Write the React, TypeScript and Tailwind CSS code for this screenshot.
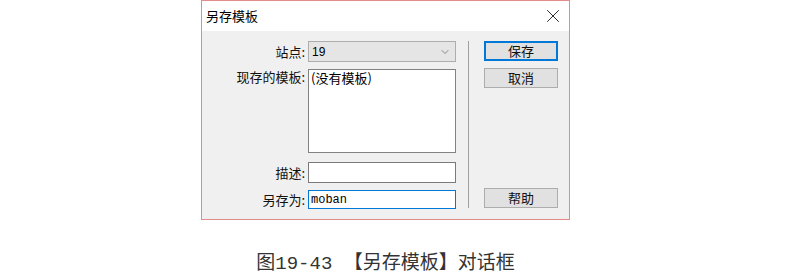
import { ChevronDown, X } from "lucide-react";

const ui = { fontFamily: '"Noto Sans CJK SC", "Noto Sans", sans-serif' };

function Btn({ label, focus }: { label: string; focus?: boolean }) {
  return (
    <div
      className={
        "flex h-[20px] w-[74px] items-center justify-center text-[13px] text-[#111] bg-[#e1e1e1] " +
        (focus ? "border-2 border-[#0078d7]" : "border border-[#adadad]")
      }
    >
      {label}
    </div>
  );
}

export default function App() {
  return (
    <div className="h-[279px] w-[812px] bg-white overflow-hidden" style={ui}>
      <div className="ml-[201px] flex h-[220px] w-[369px] flex-col border border-[#e38b8b] bg-[#f0f0f0]">
        {/* title bar */}
        <div className="flex h-[30px] items-center justify-between bg-white pl-[4px] pr-[5px]">
          <span className="text-[13px] text-black">另存模板</span>
          <X size={22} strokeWidth={0.9} className="text-black" />
        </div>

        <div className="flex flex-1 pt-[10px]">
          {/* fields */}
          <div className="flex w-[256px] flex-col">
            <div className="flex h-[21px] items-center">
              <span className="w-[106px] pr-[3px] text-right text-[13px] text-[#111]">站点:</span>
              <div className="flex h-[21px] w-[148px] items-center justify-between border border-[#adadad] bg-[#e5e5e5] pl-[3px] pr-[4px]">
                <span className="text-[12px] text-black" style={{ fontFamily: '"Liberation Sans", sans-serif' }}>19</span>
                <ChevronDown size={12} strokeWidth={1.3} className="text-[#555]" />
              </div>
            </div>
            <div className="mt-[7px] flex">
              <span className="w-[106px] pr-[3px] text-right text-[13px] leading-[16px] text-[#111]">现存的模板:</span>
              <div className="h-[84px] w-[148px] border border-[#828282] bg-white pl-[2px] text-[13px] leading-[16px] text-black">
                (没有模板)
              </div>
            </div>
            <div className="mt-[9px] flex h-[21px] items-center">
              <span className="w-[106px] pr-[3px] text-right text-[13px] text-[#111]">描述:</span>
              <div className="h-[21px] w-[148px] border border-[#7a7a7a] bg-white" />
            </div>
            <div className="mt-[7px] flex h-[19px] items-center">
              <span className="w-[106px] pr-[3px] text-right text-[13px] text-[#111]">另存为:</span>
              <div
                className="flex h-[19px] w-[148px] items-center border border-[#0078d7] bg-white pl-[2px] text-[12px] text-black"
                style={{ fontFamily: '"Liberation Mono", monospace' }}
              >
                moban
              </div>
            </div>
          </div>

          {/* separator */}
          <div className="ml-[10px] h-[167px] w-px bg-[#a0a0a0]" />

          {/* buttons */}
          <div className="ml-[15px] flex flex-col">
            <Btn label="保存" focus />
            <div className="mt-[7px]">
              <Btn label="取消" />
            </div>
            <div className="mt-[100px]">
              <Btn label="帮助" />
            </div>
          </div>
        </div>
      </div>

      <div
        className="ml-[201px] mt-[30px] w-[369px] whitespace-nowrap text-center text-[19px] text-[#333]"
        style={{ fontFamily: '"Liberation Mono", "Noto Sans CJK SC", monospace' }}
      >
        图19-43 【另存模板】对话框
      </div>
    </div>
  );
}
